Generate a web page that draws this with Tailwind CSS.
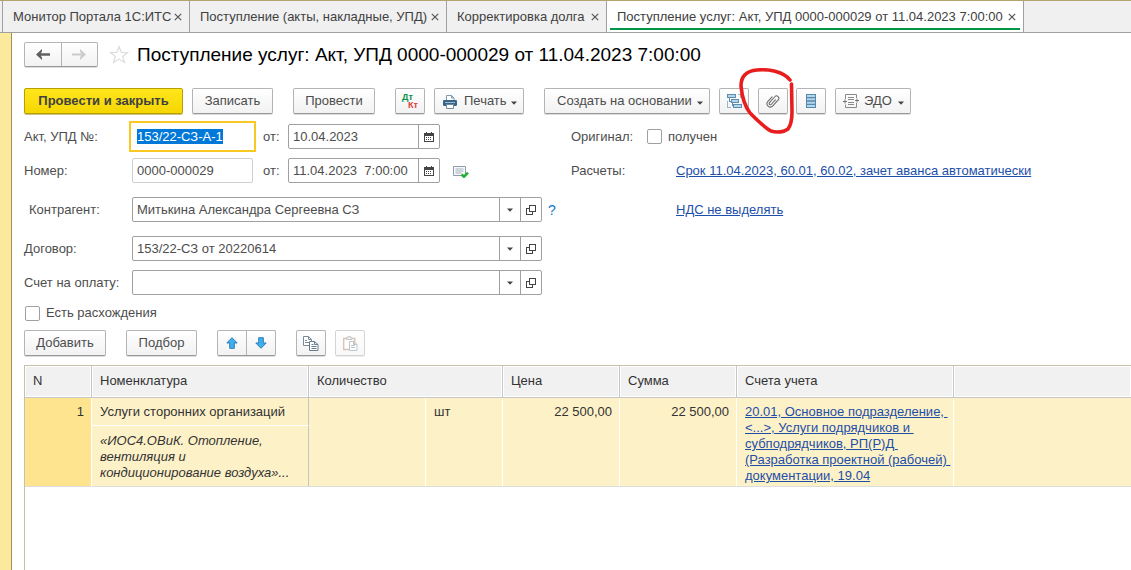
<!DOCTYPE html>
<html lang="ru">
<head>
    <meta charset="UTF-8">
    <meta name="viewport" content="width=device-width, initial-scale=1.0">
    <title>Поступление услуг: Акт, УПД 0000-000029</title>
    <script src="https://cdn.jsdelivr.net/npm/@tailwindcss/browser@4"></script>
</head>
<body class="bg-white font-['Liberation_Sans',Arial,sans-serif] text-[13px] leading-4 text-[#4d4d4d]">

<!-- shared icons -->
<svg class="hidden">
    <symbol id="close" viewBox="0 0 8 8"><path d="M.8.8l6.4 6.4M7.2.8L.8 7.2" stroke="#555" stroke-width="1.2" fill="none"/></symbol>
    <symbol id="caret" viewBox="0 0 6 4"><path d="M0 .5h6L3 3.8z" fill="#444"/></symbol>
    <symbol id="open" viewBox="0 0 10 10" shape-rendering="crispEdges"><path d="M3.5.5h6v6h-6zM3 3.5H.5v6h6V7" stroke="#444" fill="none"/></symbol>
    <symbol id="calendar" viewBox="0 0 10 10" shape-rendering="crispEdges">
        <path d="M0 1h2V0h1v1h4V0h1v1h2v9H0zM1 4v5h8V4z" fill="#444" fill-rule="evenodd"/>
        <path d="M2 5h1v1H2zM4 5h1v1H4zM6 5h1v1H6zM2 7h1v1H2zM4 7h1v1H4zM6 7h1v1H6z" fill="#444"/>
    </symbol>
</svg>

<div class="min-h-screen flex flex-col border-t border-[#b2a46e]">

    <nav class="flex h-8 bg-[#f0f0f0] border-b border-[#a0a0a0] pl-[2px] text-[#404040]">
        <div class="flex items-center justify-between w-[188px] pl-[10px] pr-[7px] border-x border-[#a0a0a0] whitespace-nowrap">
            <a href="#">Монитор Портала 1С:ИТС</a>
            <button aria-label="Закрыть"><svg class="size-2"><use href="#close"/></svg></button>
        </div>
        <div class="flex items-center justify-between w-[257px] pl-[10px] pr-[7px] border-r border-[#a0a0a0] whitespace-nowrap">
            <a href="#">Поступление (акты, накладные, УПД)</a>
            <button aria-label="Закрыть"><svg class="size-2"><use href="#close"/></svg></button>
        </div>
        <div class="flex items-center justify-between w-[160px] pl-[10px] pr-[7px] border-r border-[#a0a0a0] whitespace-nowrap">
            <a href="#">Корректировка долга</a>
            <button aria-label="Закрыть"><svg class="size-2"><use href="#close"/></svg></button>
        </div>
        <div class="flex w-[417px] h-8 px-[3px] pb-[2px] bg-white border-r border-b border-r-[#a0a0a0] border-b-[#a0a0a0] whitespace-nowrap">
            <div class="flex flex-1 items-center justify-between pl-[7px] pr-1 pt-1 border-b-2 border-[#009646]">
                <a href="#">Поступление услуг: Акт, УПД 0000-000029 от 11.04.2023 7:00:00</a>
                <button aria-label="Закрыть"><svg class="size-2"><use href="#close"/></svg></button>
            </div>
        </div>
    </nav>

    <div class="flex flex-1">
        <aside class="w-3 shrink-0 bg-[#fbe99c] border-r border-[#9c9060]"></aside>

        <main class="flex flex-1 flex-col min-w-0 pl-3 pt-[9px]">

            <header class="flex items-center h-[25px]">
                <div class="flex w-[74px] h-[25px] border border-[#b4b4b4] border-b-[#989898] rounded-xs bg-linear-to-b from-white to-[#f2f2f2] shadow-[0_1px_0_#ddd]">
                    <button aria-label="Назад" class="flex-1 flex items-center justify-center border-r border-[#b4b4b4]">
                        <svg class="w-[14px] h-[11px]" viewBox="0 0 14 11"><path d="M0 5.5L6 0v2.500L4.800 4.300H14v2.400H4.800L6 8.500V11z" fill="#606060"/></svg>
                    </button>
                    <button aria-label="Вперед" class="flex-1 flex items-center justify-center" disabled>
                        <svg class="w-[14px] h-[11px]" viewBox="0 0 14 11"><path d="M14 5.5L8 0v2.500L9.200 4.500H0v2h9.200L8 8.500V11z" fill="#ccc"/></svg>
                    </button>
                </div>
                <button aria-label="В избранное" class="ml-[11px]">
                    <svg class="w-5 h-5" viewBox="0 0 20 20"><path d="M10 1.5l2.3 5.8 6.2.3-4.8 3.9 1.7 6-5.4-3.4-5.4 3.4 1.7-6-4.8-3.9 6.2-.3z" stroke="#ddd" stroke-width="1.2" fill="#fff"/></svg>
                </button>
                <h1 class="ml-2 text-[19px] leading-6 text-black whitespace-nowrap">Поступление услуг: Акт, УПД 0000-000029 от 11.04.2023 7:00:00</h1>
            </header>

            <div class="flex mt-[21px] h-[26px] whitespace-nowrap">
                <button class="w-[159px] border border-[#b8a000] rounded-xs bg-linear-to-b from-[#ffe61a] to-[#f5d600] shadow-[0_1px_0_#c9c08a] font-bold text-[#404040]">Провести и закрыть</button>
                <button class="ml-[9px] w-[81px] border border-[#b4b4b4] border-b-[#989898] rounded-xs bg-linear-to-b from-white to-[#f2f2f2] shadow-[0_1px_0_#ddd]">Записать</button>
                <button class="ml-5 w-[82px] border border-[#b4b4b4] border-b-[#989898] rounded-xs bg-linear-to-b from-white to-[#f2f2f2] shadow-[0_1px_0_#ddd]">Провести</button>
                <button class="ml-5 w-[30px] flex flex-col items-start justify-center border border-[#b4b4b4] border-b-[#989898] rounded-xs bg-linear-to-b from-white to-[#f2f2f2] shadow-[0_1px_0_#ddd] text-[9px] leading-2 font-bold">
                    <span class="pl-[6px] text-[#0a9347]">Дт</span>
                    <span class="pl-3 text-[#e03c3c]">Кт</span>
                </button>
                <button class="ml-[9px] w-[90px] flex items-center pl-2 pr-[6px] border border-[#b4b4b4] border-b-[#989898] rounded-xs bg-linear-to-b from-white to-[#f2f2f2] shadow-[0_1px_0_#ddd]">
                    <svg class="w-[14px] h-[14px] mt-[2px]" viewBox="0 0 14 14">
                        <path d="M3.5 5V.5h5l2.5 2.500V5M8.500.5V3H11" stroke="#7e99ad" fill="#fff"/>
                        <rect y="5" width="14" height="6" rx="1.200" fill="#37648a"/>
                        <path d="M2 7.500h10" stroke="#9dbbd0"/>
                        <path d="M3.500 9.500h7v4h-7z" stroke="#6d8ba1" fill="#fff"/>
                    </svg>
                    <span class="ml-[7px]">Печать</span>
                    <svg class="ml-auto mt-1 w-[6px] h-1"><use href="#caret"/></svg>
                </button>
                <button class="ml-5 w-[166px] flex items-center pl-3 pr-[6px] border border-[#b4b4b4] border-b-[#989898] rounded-xs bg-linear-to-b from-white to-[#f2f2f2] shadow-[0_1px_0_#ddd]">
                    Создать на основании
                    <svg class="ml-auto mt-1 w-[6px] h-1"><use href="#caret"/></svg>
                </button>
                <button aria-label="Структура подчиненности" class="ml-[9px] w-[30px] flex items-center justify-center border border-[#b4b4b4] border-b-[#989898] rounded-xs bg-linear-to-b from-white to-[#f2f2f2] shadow-[0_1px_0_#ddd]">
                    <svg class="w-[15px] h-[15px]" viewBox="0 0 15 15" shape-rendering="crispEdges">
                        <path d="M.5.500h8v3h-8zM4.500 5.500h7v3h-7zM6.500 10.500h8v3h-8z" stroke="#5f8db0" fill="#b4d4ea"/>
                        <path d="M2.500 4v3.500H4M5.500 9v2.500" stroke="#5f8db0" fill="none"/>
                        <path d="M11 .5h2.500V4M.5 7v6.500H4" stroke="#9bb6c9" fill="none"/>
                    </svg>
                </button>
                <div class="relative ml-[9px] flex">
                    <button aria-label="Присоединенные файлы" class="w-[30px] flex items-center justify-center border border-[#b4b4b4] border-b-[#989898] rounded-xs bg-linear-to-b from-white to-[#f2f2f2] shadow-[0_1px_0_#ddd]">
                        <svg class="w-[14px] h-[14px]" viewBox="0 0 14 14"><path transform="rotate(42 7 7)" d="M3.500 4.500v6.200a3.300 3.300 0 0 0 6.600 0V2.600a2.300 2.300 0 0 0-4.600 0v7.900a1.200 1.200 0 0 0 2.500 0V4.500" stroke="#666" stroke-width="1" stroke-linecap="round" fill="none"/></svg>
                    </button>
                    <!-- hand-drawn mark round the paperclip -->
                    <svg class="absolute -left-5 -top-5 w-[60px] h-[70px] max-w-none pointer-events-none" viewBox="738 68 60 70">
                        <path d="M790 80C783 71 768 69 757 70C745 71 741 77 741 86C742 97 744 105 750 113C757 120 765 128 771 131C777 133 784 132 788 129C791 125 792 119 792 112L791.500 84" stroke="#e81e1e" stroke-width="3.600" stroke-linecap="round" stroke-linejoin="round" fill="none"/>
                    </svg>
                </div>
                <button aria-label="Реестр" class="ml-2 w-[30px] flex items-center justify-center border border-[#b4b4b4] border-b-[#989898] rounded-xs bg-linear-to-b from-white to-[#f2f2f2] shadow-[0_1px_0_#ddd]">
                    <svg class="w-[10px] h-[14px]" viewBox="0 0 10 14"><path d="M0 0h10v14H0z" fill="#5688ab"/><path d="M1 2h8M1 5.300h8M1 8.700h8M1 12h8" stroke="#b5d5ea" stroke-width="2"/></svg>
                </button>
                <button class="ml-[9px] w-[76px] flex items-center pl-[7px] pr-[6px] border border-[#b4b4b4] border-b-[#989898] rounded-xs bg-linear-to-b from-white to-[#f2f2f2] shadow-[0_1px_0_#ddd]">
                    <svg class="w-4 h-[14px]" viewBox="0 0 16 14">
                        <path d="M2.500 5V.5h11V4M2.500 10.500v3h11V9M5 3.500h6M5 5.500h6M5 8.500h6M5 10.500h6" stroke="#8a8a8a" fill="none"/>
                        <path d="M0 7.500h4M2 5.500v4M12 6.500h4M14 4.500v4" stroke="#777" fill="none"/>
                    </svg>
                    <span class="ml-[5px]">ЭДО</span>
                    <svg class="ml-auto mt-1 w-[6px] h-1"><use href="#caret"/></svg>
                </button>
            </div>

            <form class="grid grid-cols-[108px_439px_105px_1fr] items-center mt-[10px] whitespace-nowrap">
                <label for="act">Акт, УПД №:</label>
                <div class="flex items-center h-[25px]">
                    <input id="act" value="153/22-СЗ-А-1" class="w-[121px] h-[25px] px-[5px] outline-2 outline-offset-1 outline-[#f8c922] selection:bg-[#0078d7] selection:text-white">
                    <label for="act-date" class="w-[35px] pl-[10px]">от:</label>
                    <div class="flex w-[152px] h-[25px] border border-[#a0a0a0] rounded-xs">
                        <input id="act-date" value="10.04.2023" class="flex-1 min-w-0 px-1">
                        <button type="button" aria-label="Календарь" class="w-[21px] flex items-center justify-center border-l border-[#a0a0a0]"><svg class="size-[10px]"><use href="#calendar"/></svg></button>
                    </div>
                </div>
                <span>Оригинал:</span>
                <label class="flex items-center gap-[6px] -ml-[29px]"><input type="checkbox" class="appearance-none size-[15px] border border-[#a0a0a0] rounded-xs">получен</label>

                <label for="number" class="mt-[9px]">Номер:</label>
                <div class="flex items-center h-[25px] mt-[9px]">
                    <input id="number" value="0000-000029" class="w-[121px] h-[25px] px-1 border border-[#cfcfcf] rounded-xs">
                    <label for="date" class="w-[35px] pl-[10px]">от:</label>
                    <div class="flex w-[152px] h-[25px] border border-[#a0a0a0] rounded-xs">
                        <input id="date" value="11.04.2023  7:00:00" class="flex-1 min-w-0 px-1 whitespace-pre">
                        <button type="button" aria-label="Календарь" class="w-[21px] flex items-center justify-center border-l border-[#a0a0a0]"><svg class="size-[10px]"><use href="#calendar"/></svg></button>
                    </div>
                    <svg class="w-4 h-3 ml-[13px] mt-[3px]" viewBox="0 0 16 12">
                        <path d="M.5.500h12v9H.5z" stroke="#8d9dab" fill="#f6f9fb"/>
                        <path d="M2.500 3h8M2.500 5h8M2.500 7h6" stroke="#a6b3be"/>
                        <path d="M8.500 8.500l2.500 2.200 4-4" stroke="#25b034" stroke-width="2.600" fill="none"/>
                    </svg>
                </div>
                <span class="mt-[9px]">Расчеты:</span>
                <a href="#" class="mt-[9px] text-[#1d4fa8] underline">Срок 11.04.2023, 60.01, 60.02, зачет аванса автоматически</a>

                <label for="partner" class="mt-[14px] pl-[5px]">Контрагент:</label>
                <div class="flex items-center mt-[14px]">
                    <div class="flex w-[410px] h-[25px] border border-[#a0a0a0] rounded-xs">
                        <input id="partner" value="Митькина Александра Сергеевна СЗ" class="flex-1 min-w-0 px-1">
                        <button type="button" aria-label="Выбрать" class="w-[21px] flex items-center justify-center border-l border-[#a0a0a0]"><svg class="w-[6px] h-1"><use href="#caret"/></svg></button>
                        <button type="button" aria-label="Открыть" class="w-[21px] flex items-center justify-center border-l border-[#a0a0a0]"><svg class="size-[10px]"><use href="#open"/></svg></button>
                    </div>
                    <button type="button" class="ml-[6px] text-[14px] text-[#0f7ac8]">?</button>
                </div>
                <span class="mt-[14px]"></span>
                <a href="#" class="mt-[14px] text-[#1d4fa8] underline">НДС не выделять</a>

                <label for="contract" class="mt-[14px]">Договор:</label>
                <div class="col-span-3 flex w-[410px] h-[25px] mt-[14px] border border-[#a0a0a0] rounded-xs">
                    <input id="contract" value="153/22-СЗ от 20220614" class="flex-1 min-w-0 px-1">
                    <button type="button" aria-label="Выбрать" class="w-[21px] flex items-center justify-center border-l border-[#a0a0a0]"><svg class="w-[6px] h-1"><use href="#caret"/></svg></button>
                    <button type="button" aria-label="Открыть" class="w-[21px] flex items-center justify-center border-l border-[#a0a0a0]"><svg class="size-[10px]"><use href="#open"/></svg></button>
                </div>

                <label for="invoice" class="mt-[9px]">Счет на оплату:</label>
                <div class="col-span-3 flex w-[410px] h-[25px] mt-[9px] border border-[#a0a0a0] rounded-xs">
                    <input id="invoice" class="flex-1 min-w-0 px-1">
                    <button type="button" aria-label="Выбрать" class="w-[21px] flex items-center justify-center border-l border-[#a0a0a0]"><svg class="w-[6px] h-1"><use href="#caret"/></svg></button>
                    <button type="button" aria-label="Открыть" class="w-[21px] flex items-center justify-center border-l border-[#a0a0a0]"><svg class="size-[10px]"><use href="#open"/></svg></button>
                </div>

                <label class="col-span-4 flex items-center gap-[6px] mt-[10px] ml-px"><input type="checkbox" class="appearance-none size-[15px] border border-[#a0a0a0] rounded-xs">Есть расхождения</label>
            </form>

            <div class="flex mt-[9px] h-[26px] whitespace-nowrap">
                <button class="w-[82px] border border-[#b4b4b4] border-b-[#989898] rounded-xs bg-linear-to-b from-white to-[#f2f2f2] shadow-[0_1px_0_#ddd]">Добавить</button>
                <button class="ml-5 w-[71px] border border-[#b4b4b4] border-b-[#989898] rounded-xs bg-linear-to-b from-white to-[#f2f2f2] shadow-[0_1px_0_#ddd]">Подбор</button>
                <div class="ml-5 flex w-[59px] border border-[#b4b4b4] border-b-[#989898] rounded-xs bg-linear-to-b from-white to-[#f2f2f2] shadow-[0_1px_0_#ddd]">
                    <button aria-label="Вверх" class="flex-1 flex items-center justify-center border-r border-[#b4b4b4]"><svg class="size-3" viewBox="0 0 12 12"><path d="M6 .7l5.200 5.300H8.300v5.300H3.700V6H.8z" fill="#3fb0ee" stroke="#2b7fb4"/></svg></button>
                    <button aria-label="Вниз" class="flex-1 flex items-center justify-center"><svg class="size-3" viewBox="0 0 12 12"><path d="M6 11.300L.8 6h2.900V.7h4.600V6h2.900z" fill="#3fb0ee" stroke="#2b7fb4"/></svg></button>
                </div>
                <button aria-label="Копировать" class="ml-5 w-[30px] flex items-center justify-center border border-[#b4b4b4] border-b-[#989898] rounded-xs bg-linear-to-b from-white to-[#f2f2f2] shadow-[0_1px_0_#ddd]">
                    <svg class="w-4 h-[15px]" viewBox="0 0 16 15">
                        <path d="M.5.500h5l3 3v6h-8zM5.500.500v3h3M2 4.500h2M2 6.500h4" stroke="#7b8a98" fill="#fff"/>
                        <path d="M6.500 5.500h5l3.500 3v6H6.500zM11.500 5.500v3H15M8.500 8.500h2M8.500 10.500h5M8.500 12.500h5" stroke="#6a7c8e" fill="#fff"/>
                    </svg>
                </button>
                <button aria-label="Вставить" disabled class="ml-[9px] w-[30px] flex items-center justify-center border border-[#d4d4d4] rounded-xs bg-linear-to-b from-white to-[#f8f8f8] shadow-[0_1px_0_#eee]">
                    <svg class="w-[15px] h-[15px]" viewBox="0 0 15 15">
                        <path d="M.7 2.500h11v11H.7z" stroke="#dcc3b5" stroke-width="1.400" fill="#fff"/>
                        <path d="M3.500 1.500h1.500V.500h2.500v1h1.500v2H3.500z" stroke="#c9c9c9" fill="#eee"/>
                        <path d="M6.500 5.500h4.500l3 3v6H6.500zM10.500 5.500v3H14M8 9.500h4M8 11.500h4" stroke="#bcc6cf" fill="#fff"/>
                    </svg>
                </button>
            </div>

            <div class="flex-1 mt-[9px] border-l border-t border-[#c9c0a8] text-[#333]">
                <table class="w-full table-fixed border-separate border-spacing-0 text-left">
                    <colgroup><col class="w-[67px]"><col class="w-[217px]"><col class="w-[117px]"><col class="w-[77px]"><col class="w-[117px]"><col class="w-[117px]"><col class="w-[217px]"><col></colgroup>
                    <thead>
                        <tr class="h-8 bg-[#f1f1f1]">
                            <th class="pl-2 pb-px font-normal border-r border-b border-[#c6c6c6] shadow-[inset_0_0_0_1px_#fff]">N</th>
                            <th class="pl-2 pb-px font-normal border-r border-b border-[#c6c6c6] shadow-[inset_0_0_0_1px_#fff]">Номенклатура</th>
                            <th colspan="2" class="pl-2 pb-px font-normal border-r border-b border-[#c6c6c6] shadow-[inset_0_0_0_1px_#fff]">Количество</th>
                            <th class="pl-2 pb-px font-normal border-r border-b border-[#c6c6c6] shadow-[inset_0_0_0_1px_#fff]">Цена</th>
                            <th class="pl-2 pb-px font-normal border-r border-b border-[#c6c6c6] shadow-[inset_0_0_0_1px_#fff]">Сумма</th>
                            <th class="pl-2 pb-px font-normal border-r border-b border-[#c6c6c6] shadow-[inset_0_0_0_1px_#fff]">Счета учета</th>
                            <th class="border-b border-[#c6c6c6] shadow-[inset_0_0_0_1px_#fff]"></th>
                        </tr>
                    </thead>
                    <tbody class="align-top bg-[#fdf1c7]">
                        <tr class="h-7">
                            <td rowspan="2" class="pt-[6px] pr-[7px] text-right bg-[#fee48e] border-r border-white border-b border-b-[#ddd]">1</td>
                            <td class="pt-[6px] pl-2 border-b border-white border-r border-r-[#c6c6c6] whitespace-nowrap">Услуги сторонних организаций</td>
                            <td rowspan="2" class="border-r border-white border-b border-b-[#ddd]"></td>
                            <td rowspan="2" class="pt-[6px] pl-2 border-r border-white border-b border-b-[#ddd]">шт</td>
                            <td rowspan="2" class="pt-[6px] pr-[7px] text-right border-r border-white border-b border-b-[#ddd]">22 500,00</td>
                            <td rowspan="2" class="pt-[6px] pr-[7px] text-right border-r border-white border-b border-b-[#ddd]">22 500,00</td>
                            <td rowspan="2" class="pt-[6px] pl-2 border-r border-white border-b border-b-[#ddd] whitespace-nowrap">
                                <a href="#" class="text-[#1d4fa8] underline">20.01, Основное подразделение,&nbsp;<br>&lt;...&gt;, Услуги подрядчиков и&nbsp;<br>субподрядчиков, РП(Р)Д&nbsp;<br>(Разработка проектной (рабочей)&nbsp;<br>документации, 19.04</a>
                            </td>
                            <td rowspan="2" class="border-b border-[#ddd]"></td>
                        </tr>
                        <tr class="h-[61px]">
                            <td class="pt-[7px] pl-2 italic border-r border-[#c6c6c6] border-b border-b-[#ddd] whitespace-nowrap">«ИОС4.ОВиК. Отопление,<br>вентиляция и<br>кондиционирование воздуха»...</td>
                        </tr>
                    </tbody>
                </table>
            </div>
        </main>
    </div>
</div>

<script>
    var act = document.getElementById("act");
    act.focus();
    act.select();
</script>

</body>
</html>
